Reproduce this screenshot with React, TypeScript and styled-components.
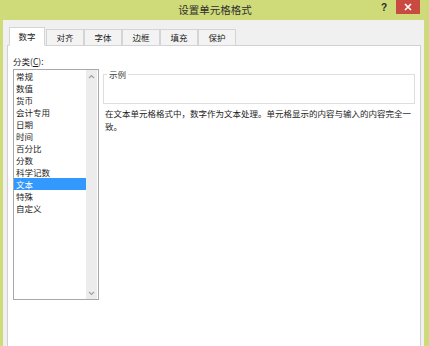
import React from 'react';
import styled, { createGlobalStyle } from 'styled-components';

const GlobalStyle = createGlobalStyle`
  html, body {
    margin: 0;
    padding: 0;
    background: #ffffff;
  }
  * {
    box-sizing: border-box;
  }
`;

const FONT = `"Noto Sans CJK SC", "Noto Sans", "Liberation Sans", sans-serif`;

const Window = styled.div`
  width: 429px;
  height: 346px;
  overflow: hidden;
  background: #cfda78;
  display: flex;
  flex-direction: column;
  font-family: ${FONT};
  color: #1c1c1c;
`;

const TitleBar = styled.div`
  height: 20px;
  flex: none;
  display: grid;
  grid-template-columns: 1fr auto 1fr;
  align-items: start;
`;

const Title = styled.div`
  font-size: 10.5px;
  line-height: 20px;
  color: #303030;
  padding-left: 1px;
`;

const Controls = styled.div`
  display: flex;
  justify-content: flex-end;
  align-items: flex-start;
  padding-right: 9px;
`;

const HelpButton = styled.div`
  font-family: "Liberation Sans", sans-serif;
  font-weight: bold;
  font-size: 10px;
  line-height: 16px;
  width: 12px;
  text-align: center;
  margin-right: 6px;
  color: #2a2a2a;
`;

const CloseButton = styled.div`
  width: 24px;
  height: 14px;
  background: #c94a40;
  color: #ffffff;
  display: flex;
  align-items: center;
  justify-content: center;
`;

const Body = styled.div`
  flex: 1;
  margin: 0 5px 0 3px;
  background: #f0f0f0;
  padding: 8px 3px 0 4px;
  display: flex;
  flex-direction: column;
`;

const TabStrip = styled.div`
  display: flex;
  align-items: flex-end;
  padding-left: 2px;
  height: 18px;
  position: relative;
  z-index: 1;
  margin-bottom: -1px;
`;

const Tab = styled.div<{ $active?: boolean }>`
  height: ${(p) => (p.$active ? '19px' : '17px')};
  width: ${(p) => (p.$active ? '36px' : '38px')};
  margin-right: ${(p) => (p.$active ? '1px' : '0')};
  border: 1px solid #d4d4d4;
  border-bottom: ${(p) => (p.$active ? '1px solid #ffffff' : '1px solid #d4d4d4')};
  background: ${(p) => (p.$active ? '#ffffff' : '#f3f3f3')};
  font-size: 8.5px;
  line-height: ${(p) => (p.$active ? '16px' : '15px')};
  text-align: center;
  color: #1c1c1c;
`;

const Panel = styled.div`
  flex: 1;
  background: #ffffff;
  border: 1px solid #d0d0d0;
  border-bottom: none;
  padding: 9px 5px 0 5px;
  display: flex;
  gap: 4px;
`;

const LeftColumn = styled.div`
  width: 86px;
  flex: none;
  display: flex;
  flex-direction: column;
`;

const FieldLabel = styled.div`
  font-size: 8.5px;
  line-height: 12px;
  height: 14px;
  u {
    text-decoration: underline;
  }
`;

const ListBox = styled.div`
  height: 231px;
  border: 1px solid #a8a8a8;
  display: flex;
  background: #ffffff;
`;

const ListItems = styled.div`
  flex: 1;
  display: flex;
  flex-direction: column;
`;

const ListItem = styled.div<{ $selected?: boolean }>`
  height: 12px;
  line-height: 12px;
  font-size: 8.5px;
  padding-left: 2px;
  white-space: nowrap;
  background: ${(p) => (p.$selected ? '#3399ff' : 'transparent')};
  color: ${(p) => (p.$selected ? '#ffffff' : '#1c1c1c')};
`;

const ScrollBar = styled.div`
  width: 11px;
  flex: none;
  background: #ececec;
  display: flex;
  flex-direction: column;
  justify-content: space-between;
  align-items: center;
  padding: 4px 0 3px;
  margin-right: 1px;
`;

const RightColumn = styled.div`
  flex: 1;
  display: flex;
  flex-direction: column;
  padding-top: 14px;
`;

const SampleBox = styled.fieldset`
  margin: 0;
  padding: 0;
  height: 35px;
  border: 1px solid #dedede;
  legend {
    font-size: 8.5px;
    line-height: 10px;
    color: #404040;
    padding: 0 2px;
    margin-left: 3px;
  }
`;

const Description = styled.p`
  margin: 3px 0 0 2px;
  font-size: 8.5px;
  line-height: 13px;
  color: #1c1c1c;
`;

const Arrow: React.FC<{ up?: boolean }> = ({ up }) => (
  <svg width="7" height="5" viewBox="0 0 7 5">
    <path
      d={up ? 'M1 4 L3.5 1.5 L6 4' : 'M1 1 L3.5 3.5 L6 1'}
      fill="none"
      stroke="#a0a0a0"
      strokeWidth="1.1"
    />
  </svg>
);

const tabs = ['数字', '对齐', '字体', '边框', '填充', '保护'];

const categories = [
  '常规',
  '数值',
  '货币',
  '会计专用',
  '日期',
  '时间',
  '百分比',
  '分数',
  '科学记数',
  '文本',
  '特殊',
  '自定义',
];

const App: React.FC = () => {
  return (
    <>
      <GlobalStyle />
      <Window>
        <TitleBar>
          <div />
          <Title>设置单元格格式</Title>
          <Controls>
            <HelpButton>?</HelpButton>
            <CloseButton>
              <svg width="8" height="8" viewBox="0 0 8 8">
                <path d="M1 1 L7 7 M7 1 L1 7" stroke="#ffffff" strokeWidth="1.6" />
              </svg>
            </CloseButton>
          </Controls>
        </TitleBar>
        <Body>
          <TabStrip>
            {tabs.map((t, i) => (
              <Tab key={t} $active={i === 0}>
                {t}
              </Tab>
            ))}
          </TabStrip>
          <Panel>
            <LeftColumn>
              <FieldLabel>
                分类(<u>C</u>):
              </FieldLabel>
              <ListBox>
                <ListItems>
                  {categories.map((c) => (
                    <ListItem key={c} $selected={c === '文本'}>
                      {c}
                    </ListItem>
                  ))}
                </ListItems>
                <ScrollBar>
                  <Arrow up />
                  <Arrow />
                </ScrollBar>
              </ListBox>
            </LeftColumn>
            <RightColumn>
              <SampleBox>
                <legend>示例</legend>
              </SampleBox>
              <Description>
                在文本单元格格式中，数字作为文本处理。单元格显示的内容与输入的内容完全一致。
              </Description>
            </RightColumn>
          </Panel>
        </Body>
      </Window>
    </>
  );
};

export default App;
